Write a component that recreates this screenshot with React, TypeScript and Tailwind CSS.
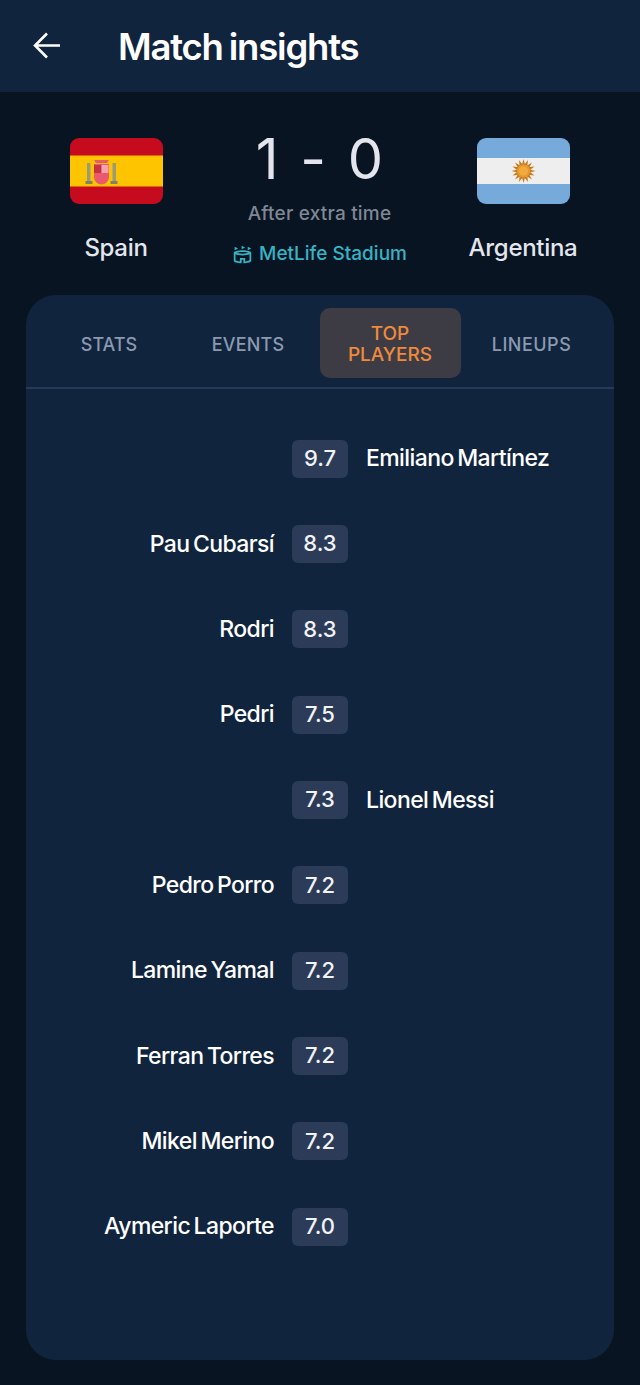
import React from "react";
import { MdOutlineStadium } from "react-icons/md";

type Player = { name: string; rating: string; side: "home" | "away" };

const players: Player[] = [
  { name: "Emiliano Martínez", rating: "9.7", side: "away" },
  { name: "Pau Cubarsí", rating: "8.3", side: "home" },
  { name: "Rodri", rating: "8.3", side: "home" },
  { name: "Pedri", rating: "7.5", side: "home" },
  { name: "Lionel Messi", rating: "7.3", side: "away" },
  { name: "Pedro Porro", rating: "7.2", side: "home" },
  { name: "Lamine Yamal", rating: "7.2", side: "home" },
  { name: "Ferran Torres", rating: "7.2", side: "home" },
  { name: "Mikel Merino", rating: "7.2", side: "home" },
  { name: "Aymeric Laporte", rating: "7.0", side: "home" },
];

const SpainFlag = () => (
  <svg viewBox="0 0 93 66" className="w-[93px] h-[66px] block">
    <rect width="93" height="66" rx="9" fill="#c60b1e" />
    <rect y="17.5" width="93" height="31" fill="#ffc400" />
    <rect x="17" y="25" width="3.5" height="18" fill="#9b9c74" />
    <rect x="42.5" y="25" width="3.5" height="18" fill="#9b9c74" />
    <rect x="15.5" y="43" width="7" height="3" fill="#7f8268" />
    <rect x="40.5" y="43" width="7" height="3" fill="#7f8268" />
    <path d="M24 22h15l-2 3h-11z" fill="#ea596e" />
    <path d="M24 26h15v13a7.5 7.5 0 0 1-15 0z" fill="#ea596e" />
    <rect x="24" y="27" width="7.5" height="8" fill="#c8313e" />
    <rect x="31.5" y="27" width="7" height="8" fill="#f4a2b0" />
  </svg>
);

const sunRays = Array.from({ length: 16 }, (_, i) => i * 22.5);

const ArgentinaFlag = () => (
  <svg viewBox="0 0 93 66" className="w-[93px] h-[66px] block">
    <rect width="93" height="66" rx="9" fill="#75aadb" />
    <rect y="20" width="93" height="26" fill="#eeeeee" />
    <g transform="translate(46.5 33)">
      {sunRays.map((deg) => (
        <path key={deg} d="M-1.6 -6L0 -12L1.6 -6z" fill="#c9791a" transform={`rotate(${deg})`} />
      ))}
      <circle r="6.5" fill="#e8982a" />
      <circle r="4.6" fill="#f2ab3f" />
    </g>
  </svg>
);

const tabs = ["STATS", "EVENTS", "TOP PLAYERS", "LINEUPS"];

export default function App() {
  return (
    <div className="w-[640px] h-[1385px] bg-[#081421] font-['Inter','Liberation_Sans',sans-serif] overflow-hidden">
      {/* Header */}
      <header className="h-[92px] bg-[#11243e] flex items-center pl-[33px]">
        <svg viewBox="0 0 27 27" className="w-[27px] h-[27px] -mt-[1px]" fill="none" stroke="#ffffff" strokeWidth="2.6">
          <path d="M27 13.5H2M14 1.5L2 13.5l12 12" />
        </svg>
        <h1 className="ml-[58px] text-[36.5px] leading-none font-semibold tracking-[-1.2px] [word-spacing:-2px] text-white mt-[2px]">
          Match insights
        </h1>
      </header>

      {/* Score */}
      <section className="h-[203px] flex pl-[21px] pr-[22px] pt-[46px]">
        <div className="w-[190px] flex flex-col items-center">
          <SpainFlag />
          <span className="mt-[29px] text-[24px] leading-[30px] font-medium tracking-[-0.3px] text-[#e4e6ee]">Spain</span>
        </div>
        <div className="flex-1 flex flex-col items-center -mt-[13px]">
          <div className="pl-[3px] text-[56px] leading-[68px] font-normal tracking-[3px] text-[#e4e4ee] whitespace-pre">1 - 0</div>
          <div className="mt-[9px] text-[19px] leading-[24px] font-medium tracking-[0.2px] text-[#7f8794]">After extra time</div>
          <div className="mt-[16px] flex items-center gap-[6px] text-[#36b3c4]">
            <MdOutlineStadium className="w-[21px] h-[21px]" />
            <span className="text-[19px] leading-[24px] font-medium">MetLife Stadium</span>
          </div>
        </div>
        <div className="w-[190px] flex flex-col items-center">
          <ArgentinaFlag />
          <span className="mt-[29px] text-[24px] leading-[30px] font-medium tracking-[-0.3px] text-[#e4e6ee]">Argentina</span>
        </div>
      </section>

      {/* Card */}
      <main className="mx-[26px] h-[1065px] rounded-[30px] bg-[#11243e]">
        <div className="h-[94px] border-b-2 border-[#25395a] flex items-start pt-[13px] pl-[16px] pr-[12px]">
          {tabs.map((tab, i) => (
            <div
              key={tab}
              className={
                i === 2
                  ? "w-[141px] h-[70px] rounded-[10px] bg-[#3d3c45] flex items-center justify-center text-center text-[19px] leading-[21px] font-medium text-[#ef8a3c]"
                  : i === 0
                    ? "w-[134px] h-[70px] flex items-center justify-center text-[18px] font-medium text-[#8a9ab0]"
                    : i === 1
                      ? "w-[144px] h-[70px] flex items-center justify-center text-[18px] font-medium tracking-[0.2px] text-[#8a9ab0]"
                      : "flex-1 h-[70px] flex items-center justify-center text-[18px] font-medium tracking-[0.5px] text-[#8a9ab0]"
              }
            >
              {tab === "TOP PLAYERS" ? (
                <span className="mt-[2px] -ml-[1px]">
                  TOP
                  <br />
                  PLAYERS
                </span>
              ) : (
                <span className="mt-[2px]">{tab}</span>
              )}
            </div>
          ))}
        </div>

        <div className="pt-[27px] flex flex-col">
          {players.map((p) => (
            <div key={p.name} className="h-[85.33px] grid grid-cols-[1fr_auto_1fr] gap-x-[18px] items-center">
              <span className="text-right text-[23px] font-medium tracking-[-0.6px] [word-spacing:-2px] text-white">
                {p.side === "home" ? p.name : ""}
              </span>
              <span className="h-[38px] w-[56px] rounded-[6px] bg-[#2c3c58] flex items-center justify-center text-[22px] font-medium text-[#f1f3f7]">
                {p.rating}
              </span>
              <span className="text-[23px] font-medium tracking-[-0.6px] [word-spacing:-2px] text-white">
                {p.side === "away" ? p.name : ""}
              </span>
            </div>
          ))}
        </div>
      </main>
    </div>
  );
}
